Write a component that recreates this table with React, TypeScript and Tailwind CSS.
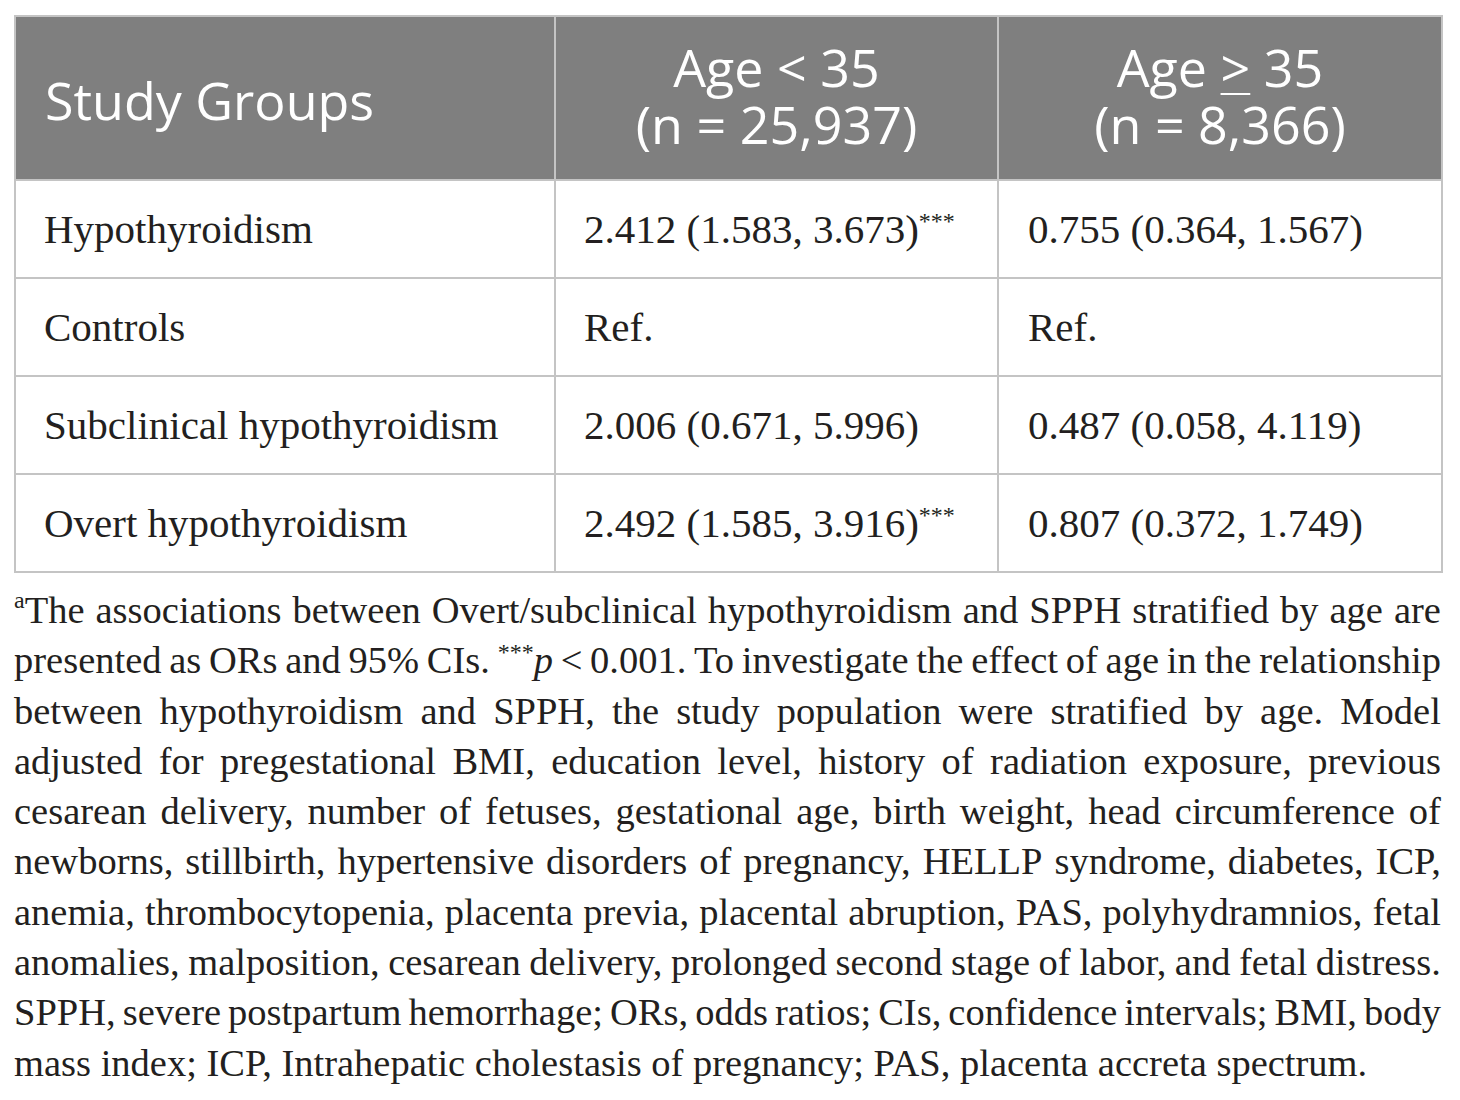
import React from 'react';

const rows: { group: string; young: string; old: string; star?: boolean }[] = [
  { group: 'Hypothyroidism', young: '2.412 (1.583, 3.673)', old: '0.755 (0.364, 1.567)', star: true },
  { group: 'Controls', young: 'Ref.', old: 'Ref.' },
  { group: 'Subclinical hypothyroidism', young: '2.006 (0.671, 5.996)', old: '0.487 (0.058, 4.119)' },
  { group: 'Overt hypothyroidism', young: '2.492 (1.585, 3.916)', old: '0.807 (0.372, 1.749)', star: true },
];

// footnote lines, kept as in the printed layout (justified)
const lines: string[] = [
  'presented as ORs and 95% CIs.',
  'between hypothyroidism and SPPH, the study population were stratified by age. Model',
  'adjusted for pregestational BMI, education level, history of radiation exposure, previous',
  'cesarean delivery, number of fetuses, gestational age, birth weight, head circumference of',
  'newborns, stillbirth, hypertensive disorders of pregnancy, HELLP syndrome, diabetes, ICP,',
  'anemia, thrombocytopenia, placenta previa, placental abruption, PAS, polyhydramnios, fetal',
  'anomalies, malposition, cesarean delivery, prolonged second stage of labor, and fetal distress.',
  'SPPH, severe postpartum hemorrhage; ORs, odds ratios; CIs, confidence intervals; BMI, body',
];

function Words({ text }: { text: string }) {
  return (
    <>
      {text.split(' ').map((w, i) => (
        <span key={i}>{w}</span>
      ))}
    </>
  );
}

export default function App() {
  return (
    <div className="w-[1460px] min-h-[1100px] bg-white pl-[14px] pt-[15px] text-[#231f20]" style={{ fontFamily: '"Liberation Serif", serif' }}>
      <table className="w-[1427px] border-collapse table-fixed">
        <colgroup>
          <col className="w-[540px]" />
          <col className="w-[443px]" />
          <col className="w-[444px]" />
        </colgroup>
        <thead>
          <tr className="h-[164px] bg-[#7f7f7f] text-white text-[52px] leading-[57px]" style={{ fontFamily: '"Open Sans", sans-serif' }}>
            <th className="border-2 border-[#c4c4c4] text-left font-normal pl-[29px] pt-[2px]">Study Groups</th>
            <th className="border-2 border-[#c4c4c4] text-center font-normal pb-[6px]">
              <div className="h-[57px]">Age &lt; 35</div>
              <div className="h-[57px]">(n = 25,937)</div>
            </th>
            <th className="border-2 border-[#c4c4c4] text-center font-normal pb-[6px]">
              <div className="h-[57px]">
                Age <span className="underline decoration-2 underline-offset-[6px]">&gt;</span> 35
              </div>
              <div className="h-[57px]">(n = 8,366)</div>
            </th>
          </tr>
        </thead>
        <tbody className="text-[41px]">
          {rows.map((r) => (
            <tr key={r.group} className="h-[98px]">
              <td className="border-2 border-[#c4c4c4] pl-[28px] pt-[1px]">{r.group}</td>
              <td className="border-2 border-[#c4c4c4] pl-[28px] pt-[1px]">
                {r.young}
                {r.star && <sup className="text-[24px] top-[-14px]">***</sup>}
              </td>
              <td className="border-2 border-[#c4c4c4] pl-[29px] pt-[1px]">{r.old}</td>
            </tr>
          ))}
        </tbody>
      </table>

      <div className="w-[1427px] mt-[12px] text-[38.5px] leading-[50.3px]">
        <div className="flex justify-between whitespace-nowrap">
          <span>
            <sup className="text-[24px] top-[-15px]">a</sup>The
          </span>
          <Words text="associations between Overt/subclinical hypothyroidism and SPPH stratified by age are" />
        </div>
        <div className="flex justify-between whitespace-nowrap">
          <Words text={lines[0]} />
          <span>
            <sup className="text-[24px] top-[-13px]">***</sup>
            <i>p</i>
          </span>
          <span>&lt;</span>
          <Words text="0.001. To investigate the effect of age in the relationship" />
        </div>
        {lines.slice(1).map((l, i) => (
          <div key={i} className="flex justify-between whitespace-nowrap">
            <Words text={l} />
          </div>
        ))}
        <div className="whitespace-nowrap">
          mass index; ICP, Intrahepatic cholestasis of pregnancy; PAS, placenta accreta spectrum.
        </div>
      </div>
    </div>
  );
}
